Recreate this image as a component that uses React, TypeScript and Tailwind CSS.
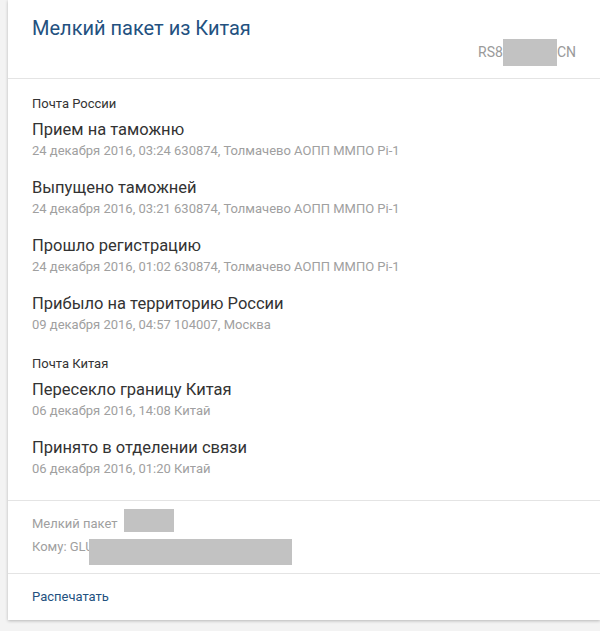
import React from 'react';

type Event = { title: string; info: string };
type Group = { operator: string; events: Event[] };

const groups: Group[] = [
  {
    operator: 'Почта России',
    events: [
      { title: 'Прием на таможню', info: '24 декабря 2016, 03:24 630874, Толмачево АОПП ММПО Pi-1' },
      { title: 'Выпущено таможней', info: '24 декабря 2016, 03:21 630874, Толмачево АОПП ММПО Pi-1' },
      { title: 'Прошло регистрацию', info: '24 декабря 2016, 01:02 630874, Толмачево АОПП ММПО Pi-1' },
      { title: 'Прибыло на территорию России', info: '09 декабря 2016, 04:57 104007, Москва' },
    ],
  },
  {
    operator: 'Почта Китая',
    events: [
      { title: 'Пересекло границу Китая', info: '06 декабря 2016, 14:08 Китай' },
      { title: 'Принято в отделении связи', info: '06 декабря 2016, 01:20 Китай' },
    ],
  },
];

export default function App() {
  return (
    <div className="min-h-[631px] bg-[#f3f3f3] pl-2 pb-[11px] font-['Roboto',sans-serif]">
      <div className="bg-white shadow-[0_1px_3px_rgba(0,0,0,0.25)]">
        {/* header */}
        <div className="px-6 pt-[14px] pb-[12px] border-b border-[#e4e4e4]">
          <h1 className="text-[20px] leading-[28px] text-[#23517f]">Мелкий пакет из Китая</h1>
          <div className="flex justify-end items-center mt-[-3px] text-[14px] text-[#9a9a9a]">
            <span>RS8</span>
            <span className="w-[54px] h-[27px] bg-[#c2c2c2]" />
            <span>CN</span>
          </div>
        </div>

        {/* history */}
        <div className="px-6 pt-[16px] pb-[21px] border-b border-[#e4e4e4]">
          {groups.map((g, gi) => (
            <div key={g.operator} className={gi > 0 ? 'mt-[20px]' : ''}>
              <div className="text-[13px] leading-[17px] text-[#333]">{g.operator}</div>
              <div className="flex flex-col gap-[15px] mt-[6px]">
                {g.events.map((e) => (
                  <div key={e.title}>
                    <div className="text-[16.5px] leading-[23px] text-[#333]">{e.title}</div>
                    <div className="text-[13px] leading-[20px] text-[#a0a0a0]">{e.info}</div>
                  </div>
                ))}
              </div>
            </div>
          ))}
        </div>

        {/* recipient */}
        <div className="px-6 pt-[8px] pb-[8px] border-b border-[#e4e4e4] text-[13px] text-[#a0a0a0]">
          <div className="flex items-end">
            <span className="leading-[16px]">Мелкий пакет</span>
            <span className="ml-[6px] w-[50px] h-[23px] bg-[#c2c2c2]" />
          </div>
          <div className="flex items-start mt-[7px]">
            <span className="leading-[16px]">Кому: GLU</span>
            <span className="w-[203px] h-[26px] bg-[#c2c2c2] -ml-[5px]" />
          </div>
        </div>

        {/* footer */}
        <div className="px-6 pt-[14px] pb-[14px] text-[13px] leading-[18px]">
          <span className="text-[#23517f]">Распечатать</span>
        </div>
      </div>
    </div>
  );
}
